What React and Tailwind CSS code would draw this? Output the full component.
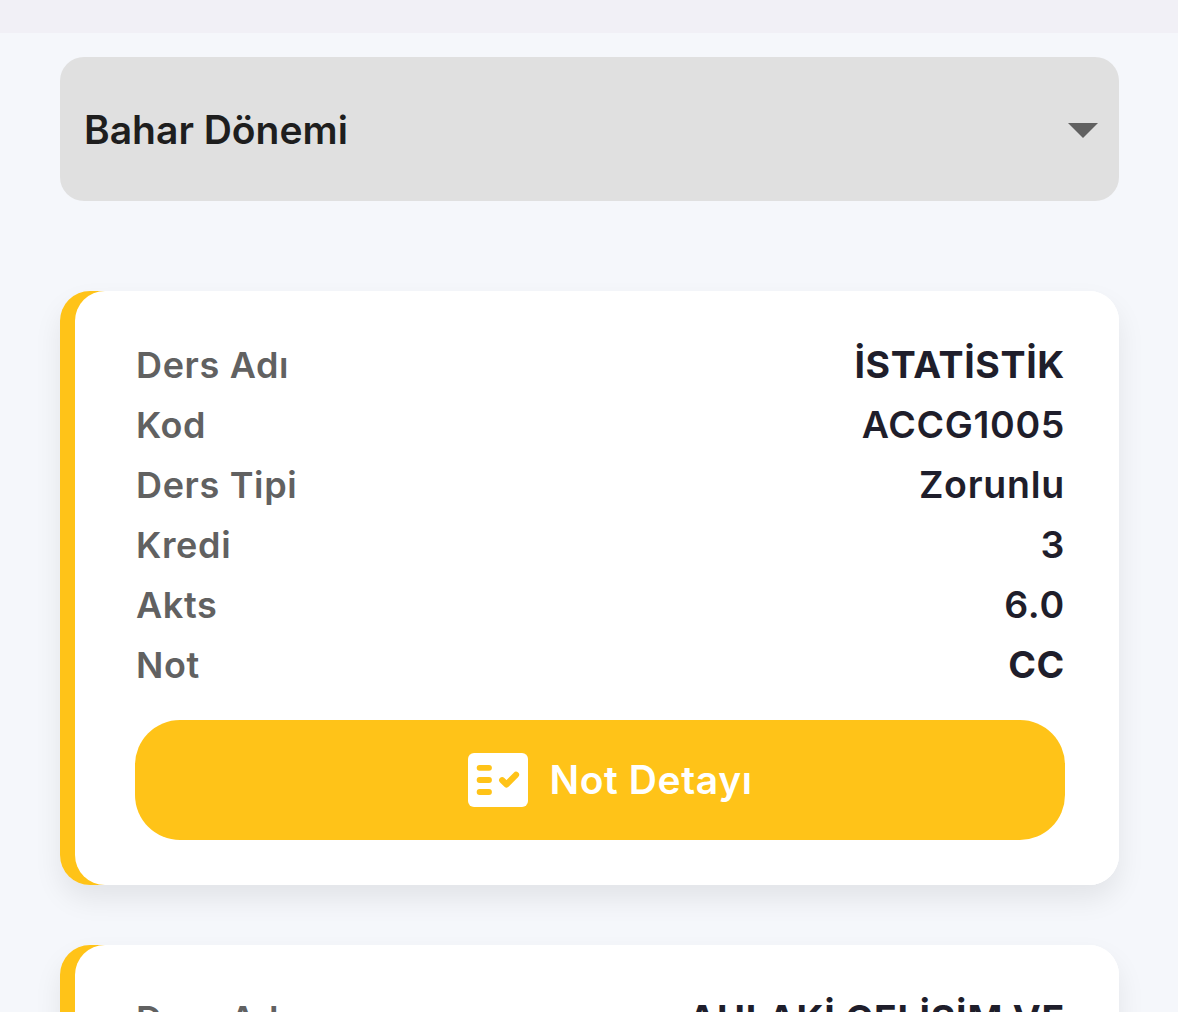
import React, { useState } from "react";

const dersler = [
  {
    satirlar: [
      { label: "Ders Adı", value: "İSTATİSTİK", stil: "font-bold tracking-[0.65px]" },
      { label: "Kod", value: "ACCG1005", stil: "font-semibold tracking-[0.65px]" },
      { label: "Ders Tipi", value: "Zorunlu", stil: "font-semibold tracking-[0.75px]" },
      { label: "Kredi", value: "3", stil: "font-semibold tracking-[0.75px]" },
      { label: "Akts", value: "6.0", stil: "font-semibold tracking-[0.75px]" },
      { label: "Not", value: "CC", stil: "font-bold tracking-[0.65px]" },
    ],
  },
  {
    satirlar: [
      { label: "Ders Adı", value: "AHLAKİ GELİŞİM VE", stil: "font-bold tracking-[0.75px]" },
    ],
  },
];

function NotIcon() {
  return (
    <svg width="60" height="54" viewBox="0 0 60 54" fill="none" className="shrink-0">
      <rect width="60" height="54" rx="6" fill="#fff" />
      <path
        d="M11.6 14.8H21M11.6 27H21M11.6 39H21"
        stroke="#ffc318"
        strokeWidth="5.8"
        strokeLinecap="round"
      />
      <path
        d="M34.2 27.2L38.6 31.4L48 21.8"
        stroke="#ffc318"
        strokeWidth="6.2"
        strokeLinecap="round"
        strokeLinejoin="round"
      />
    </svg>
  );
}

function DersCard({ ders }) {
  return (
    <div className="shrink-0 rounded-[30px] bg-[linear-gradient(90deg,#ffc318_50%,#fff_50%)] pl-[15px] shadow-[0_14px_28px_rgba(0,0,0,0.08)]">
      <div className="h-[594px] rounded-[30px] bg-white px-[60px] pt-11 pr-[54px]">
        {ders.satirlar.map((satir) => (
          <div key={satir.label} className="flex h-[60px] items-center justify-between">
            <span className="pl-px text-[36px] font-semibold tracking-[0.65px] text-[#616161]">{satir.label}</span>
            <span className={`text-[37.5px] text-[#1f1e2b] ${satir.stil}`}>{satir.value}</span>
          </div>
        ))}
        {ders.satirlar.length > 1 && (
          <button className="mt-[25px] flex h-[120px] w-full items-center justify-center gap-[21px] rounded-[45px] bg-[#ffc318] pl-[21px] text-white">
            <NotIcon />
            <span className="text-[39px] font-semibold tracking-[0.6px]">Not Detayı</span>
          </button>
        )}
      </div>
    </div>
  );
}

export default function App() {
  const [donem] = useState("Bahar Dönemi");

  return (
    <div className="h-[1012px] overflow-hidden bg-[#f5f7fb] font-['Inter',sans-serif]">
      <div className="h-[33px] bg-[#f1f0f6]" />
      <div className="flex flex-col pt-6 pr-[59px] pl-[60px]">
        <button className="flex h-36 items-center justify-between rounded-[24px] bg-[#e0e0e0] pt-[2px] pr-[21px] pl-6">
          <span className="text-[39px] font-semibold text-[#1e1e1e]">{donem}</span>
          <svg width="30" height="15" viewBox="0 0 30 15">
            <path d="M0 0H30L15 15Z" fill="#616161" />
          </svg>
        </button>

        {/* Ders kartları */}
        <div className="mt-[90px] flex flex-col gap-[60px]">
          {dersler.map((ders, index) => (
            <DersCard key={index} ders={ders} />
          ))}
        </div>
      </div>
    </div>
  );
}
